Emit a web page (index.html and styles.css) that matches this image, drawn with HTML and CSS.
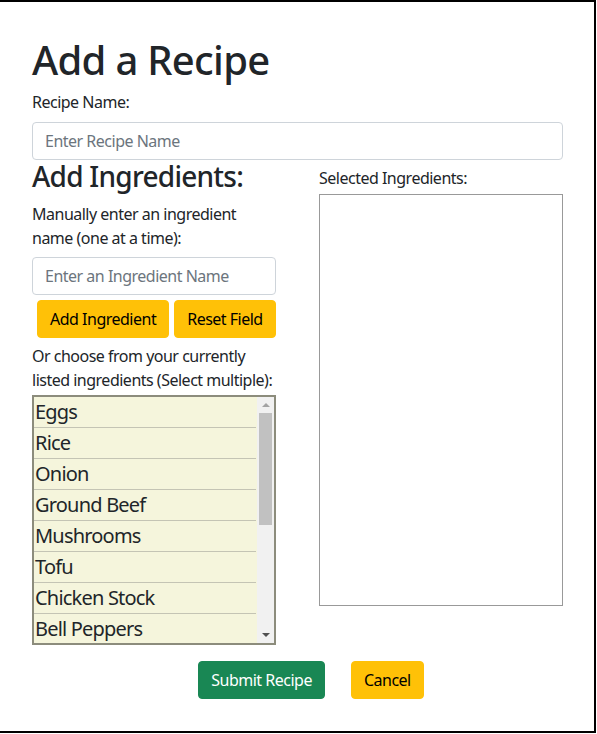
FILE: index.html
```html
<!DOCTYPE html>
<html>
<head>
<meta charset="utf-8">
<link rel="stylesheet" href="styles.css">
</head>
<body>
<div class="frame">
  <h1 class="title">Add a Recipe</h1>
  <label class="label">Recipe Name:</label>
  <div class="input wide">Enter Recipe Name</div>
  <div class="cols">
    <div class="col">
      <h3 class="sub">Add Ingredients:</h3>
      <p class="text first">Manually enter an ingredient<br>name (one at a time):</p>
      <div class="input">Enter an Ingredient Name</div>
      <div class="btns">
        <button class="btn warn">Add Ingredient</button>
        <button class="btn warn">Reset Field</button>
      </div>
      <p class="text">Or choose from your currently<br>listed ingredients (Select multiple):</p>
      <div class="select">
        <ul class="options">
          <li>Eggs</li>
          <li>Rice</li>
          <li>Onion</li>
          <li>Ground Beef</li>
          <li>Mushrooms</li>
          <li>Tofu</li>
          <li>Chicken Stock</li>
          <li>Bell Peppers</li>
        </ul>
        <div class="scrollbar">
          <div class="arrow up"></div>
          <div class="track"><div class="thumb"></div></div>
          <div class="arrow down"></div>
        </div>
      </div>
    </div>
    <div class="col right">
      <div class="label2">Selected Ingredients:</div>
      <div class="selected"></div>
    </div>
  </div>
  <div class="actions">
    <button class="btn success">Submit Recipe</button>
    <button class="btn warn">Cancel</button>
  </div>
</div>
</body>
</html>
```
FILE: styles.css
```css
* { box-sizing: border-box; }
html, body { margin: 0; padding: 0; background: #fff; }
body {
  font-family: "Noto Sans", "Open Sans", sans-serif;
  font-size: 16px;
  line-height: 1.5;
  color: #212529;
  letter-spacing: -0.5px;
  overflow: hidden;
}
.frame {
  width: 596px;
  height: 733px;
  border-top: 2px solid #000;
  border-right: 2px solid #000;
  border-bottom: 2px solid #000;
  padding: 32px 31px 0 32px;
}
.title {
  margin: 0 0 8px;
  font-size: 40px;
  font-weight: 500;
  line-height: 1.2;
  letter-spacing: -0.7px;
  position: relative;
  top: 2px;
}
.label { display: block; margin-bottom: 8px; }
.input {
  height: 38px;
  border: 1px solid #ced4da;
  border-radius: 4px;
  padding: 6px 12px;
  color: #6c757d;
  background: #fff;
  width: 244px;
  white-space: nowrap;
}
.input.wide { width: 531px; }
.cols {
  display: grid;
  grid-template-columns: 244px 244px;
  column-gap: 43px;
}
.sub {
  margin: 0 0 8px;
  font-size: 28px;
  font-weight: 500;
  line-height: 1.2;
  letter-spacing: -0.75px;
}
.text { margin: 0; white-space: nowrap; }
.text.first { margin-bottom: 7px; }
.btns {
  display: flex;
  gap: 5px;
  padding-left: 5px;
  margin: 5px 0 6px;
}
.btn {
  font-family: inherit;
  font-size: 16px;
  letter-spacing: -0.5px;
  line-height: 1.5;
  height: 38px;
  padding: 6px 12px;
  border: 1px solid transparent;
  border-radius: 4px;
  white-space: nowrap;
  cursor: pointer;
}
.btn.warn { background: #ffc107; border-color: #ffc107; color: #000; }
.btn.success { background: #198754; border-color: #198754; color: #fff; }
.select {
  margin-top: 3px;
  height: 250px;
  border: 2px solid #8c8c7c;
  background: #f5f5dc;
  display: flex;
  overflow: hidden;
}
.options {
  list-style: none;
  margin: 0;
  padding: 0;
  flex: 1;
  font-size: 20px;
  letter-spacing: -0.8px;
  line-height: 30px;
}
.options li {
  padding-left: 1px;
  border-bottom: 1px solid #c4c4b4;
  height: 31px;
  margin-right: 1px;
}
.scrollbar {
  width: 17px;
  background: #f1f1f1;
  display: flex;
  flex-direction: column;
  align-items: center;
}
.arrow { width: 0; height: 0; border-left: 4px solid transparent; border-right: 4px solid transparent; }
.arrow.up { border-bottom: 4px solid #a3a3a3; margin: 6px 0 6px; }
.arrow.down { border-top: 4px solid #505050; margin: 6px 0 6px; }
.track { flex: 1; width: 100%; padding: 0 2px; }
.thumb { background: #c1c1c1; height: 112px; }
.right { padding-top: 6px; }
.label2 { margin-bottom: 4px; }
.selected {
  height: 412px;
  border: 1px solid #999;
}
.actions {
  display: flex;
  justify-content: center;
  gap: 26px;
  margin-top: 16px;
  padding-left: 27px;
}
```
